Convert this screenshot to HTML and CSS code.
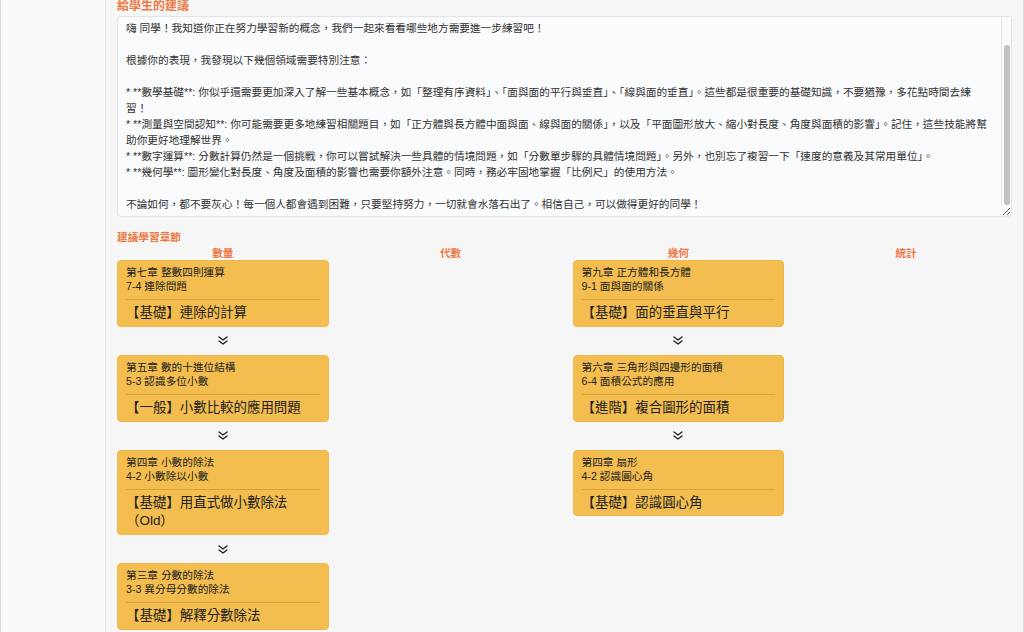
FILE: index.html
```html
<!DOCTYPE html>
<html lang="zh-Hant">
<head>
<meta charset="utf-8">
<title>給學生的建議</title>
<link rel="stylesheet" href="styles.css">
</head>
<body>
<div class="layout">
  <aside class="sidebar"></aside>
  <main class="main">
    <h2 class="heading">給學生的建議</h2>
    <div class="advice-wrap">
      <textarea class="advice" readonly>嗨 同學！我知道你正在努力學習新的概念，我們一起來看看哪些地方需要進一步練習吧！

根據你的表現，我發現以下幾個領域需要特別注意：

* **數學基礎**: 你似乎還需要更加深入了解一些基本概念，如「整理有序資料」、「面與面的平行與垂直」、「線與面的垂直」。這些都是很重要的基礎知識，不要猶豫，多花點時間去練習！
* **測量與空間認知**: 你可能需要更多地練習相關題目，如「正方體與長方體中面與面、線與面的關係」，以及「平面圖形放大、縮小對長度、角度與面積的影響」。記住，這些技能將幫助你更好地理解世界。
* **數字運算**: 分數計算仍然是一個挑戰，你可以嘗試解決一些具體的情境問題，如「分數單步驟的具體情境問題」。另外，也別忘了複習一下「速度的意義及其常用單位」。
* **幾何學**: 圖形變化對長度、角度及面積的影響也需要你額外注意。同時，務必牢固地掌握「比例尺」的使用方法。

不論如何，都不要灰心！每一個人都會遇到困難，只要堅持努力，一切就會水落石出了。相信自己，可以做得更好的同學！</textarea>
      <div class="fake-scrollbar"><div class="fake-thumb"></div></div>
    </div>
    <h3 class="subheading">建議學習章節</h3>
    <div class="columns">
      <section class="col">
        <div class="col-title">數量</div>
        <div class="card">
          <div class="card-meta">第七章 整數四則運算<br>7-4 連除問題</div>
          <div class="card-title">【基礎】連除的計算</div>
        </div>
        <div class="arrow"><svg width="10" height="9" viewBox="0 0 10 9"><polyline points="1,1 5,4 9,1"/><polyline points="1,5 5,8 9,5"/></svg></div>
        <div class="card">
          <div class="card-meta">第五章 數的十進位結構<br>5-3 認識多位小數</div>
          <div class="card-title">【一般】小數比較的應用問題</div>
        </div>
        <div class="arrow"><svg width="10" height="9" viewBox="0 0 10 9"><polyline points="1,1 5,4 9,1"/><polyline points="1,5 5,8 9,5"/></svg></div>
        <div class="card">
          <div class="card-meta">第四章 小數的除法<br>4-2 小數除以小數</div>
          <div class="card-title">【基礎】用直式做小數除法（Old）</div>
        </div>
        <div class="arrow"><svg width="10" height="9" viewBox="0 0 10 9"><polyline points="1,1 5,4 9,1"/><polyline points="1,5 5,8 9,5"/></svg></div>
        <div class="card">
          <div class="card-meta">第三章 分數的除法<br>3-3 異分母分數的除法</div>
          <div class="card-title">【基礎】解釋分數除法</div>
        </div>
      </section>
      <section class="col">
        <div class="col-title">代數</div>
      </section>
      <section class="col">
        <div class="col-title">幾何</div>
        <div class="card">
          <div class="card-meta">第九章 正方體和長方體<br>9-1 面與面的關係</div>
          <div class="card-title">【基礎】面的垂直與平行</div>
        </div>
        <div class="arrow"><svg width="10" height="9" viewBox="0 0 10 9"><polyline points="1,1 5,4 9,1"/><polyline points="1,5 5,8 9,5"/></svg></div>
        <div class="card">
          <div class="card-meta">第六章 三角形與四邊形的面積<br>6-4 面積公式的應用</div>
          <div class="card-title">【進階】複合圖形的面積</div>
        </div>
        <div class="arrow"><svg width="10" height="9" viewBox="0 0 10 9"><polyline points="1,1 5,4 9,1"/><polyline points="1,5 5,8 9,5"/></svg></div>
        <div class="card">
          <div class="card-meta">第四章 扇形<br>4-2 認識圓心角</div>
          <div class="card-title">【基礎】認識圓心角</div>
        </div>
      </section>
      <section class="col">
        <div class="col-title">統計</div>
      </section>
    </div>
  </main>
</div>
</body>
</html>
```

FILE: styles.css
```css
html, body {
  margin: 0;
  padding: 0;
  height: 100%;
  overflow: hidden;
}

body {
  font-family: "Liberation Sans", "Noto Sans CJK TC", sans-serif;
  color: #333;
  background: #f6f6f6;
}

.layout {
  display: flex;
  height: 632px;
  border-right: 1px solid #dedede;
}

.sidebar {
  width: 104px;
  flex: 0 0 104px;
  background: #fafafa;
  border-left: 1px solid #dcdcdc;
  border-right: 1px solid #e6e6e6;
}

.main {
  flex: 1;
  padding: 0 11px;
  background: #f6f6f6;
  overflow: hidden;
}

.heading {
  margin: 0 0 4px;
  font-size: 12px;
  line-height: 12px;
  font-weight: bold;
  color: #ec7a45;
}

.advice-wrap {
  position: relative;
}

.advice {
  display: block;
  box-sizing: border-box;
  width: 100%;
  height: 201px;
  margin: 0;
  padding: 3px 23px 0 8px;
  border: 1px solid #e3e4e6;
  border-radius: 4px;
  background: #fafbfc;
  color: #333;
  font-family: "Liberation Sans", "Noto Sans CJK TC", sans-serif;
  font-size: 10.67px;
  line-height: 16px;
  overflow: hidden;
  resize: vertical;
  outline: none;
}

.fake-scrollbar {
  position: absolute;
  top: 1px;
  right: 1px;
  bottom: 11px;
  width: 9px;
  background: #fafafa;
  border-left: 1px solid #e6e6e6;
}

.fake-thumb {
  margin: 28px 0 0 2px;
  width: 6px;
  height: 160px;
  border-radius: 3px;
  background: #c1c1c1;
}

.subheading {
  margin: 13px 0 2px;
  font-size: 10.67px;
  line-height: 14px;
  font-weight: bold;
  color: #ec7a45;
}

.columns {
  display: grid;
  grid-template-columns: repeat(4, 1fr);
  column-gap: 16px;
  align-items: start;
}

.col {
  display: flex;
  flex-direction: column;
}

.col-title {
  text-align: center;
  font-size: 10.67px;
  line-height: 14px;
  font-weight: bold;
  color: #ec7a45;
}

.card {
  background: #f3bd4f;
  border: 1px solid #eeb749;
  border-radius: 4px;
  padding: 4px 8px 3px;
  color: #222;
}

.card-meta {
  font-size: 10.67px;
  line-height: 14px;
  padding-bottom: 6px;
  border-bottom: 1px solid #d9a43f;
}

.card-title {
  font-size: 13.44px;
  line-height: 18.8px;
  padding-top: 4px;
}

.arrow {
  height: 28px;
  display: flex;
  align-items: center;
  justify-content: center;
}

.arrow svg {
  fill: none;
  stroke: #222;
  stroke-width: 1.4;
  stroke-linecap: round;
  stroke-linejoin: round;
}
```
